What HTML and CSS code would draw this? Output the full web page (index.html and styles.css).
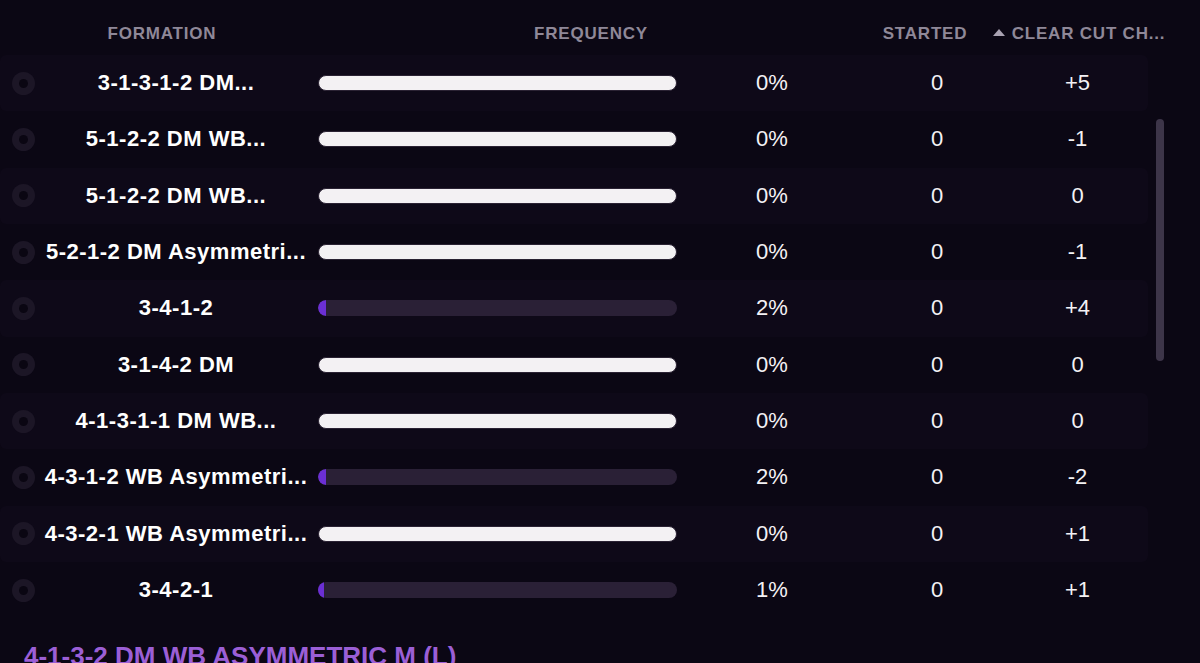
FILE: index.html
```html
<!DOCTYPE html>
<html>
<head>
<meta charset="utf-8">
<link rel="stylesheet" href="styles.css">
</head>
<body>
<div class="panel">
  <div class="head">
    <div>FORMATION</div>
    <div>FREQUENCY</div>
    <div>STARTED</div>
    <div><span class="tri"></span>CLEAR CUT CH...</div>
  </div>
  <div class="body">
    <div class="list">
      <div class="row stripe"><span class="radio"></span><span class="name">3-1-3-1-2 DM...</span><span class="bar full"></span><span class="val pct">0%</span><span class="val">0</span><span class="val">+5</span></div>
      <div class="row"><span class="radio"></span><span class="name">5-1-2-2 DM WB...</span><span class="bar full"></span><span class="val pct">0%</span><span class="val">0</span><span class="val">-1</span></div>
      <div class="row stripe"><span class="radio"></span><span class="name">5-1-2-2 DM WB...</span><span class="bar full"></span><span class="val pct">0%</span><span class="val">0</span><span class="val">0</span></div>
      <div class="row"><span class="radio"></span><span class="name">5-2-1-2 DM Asymmetri...</span><span class="bar full"></span><span class="val pct">0%</span><span class="val">0</span><span class="val">-1</span></div>
      <div class="row stripe"><span class="radio"></span><span class="name">3-4-1-2</span><span class="bar track"><span class="fill" style="width:8px"></span></span><span class="val pct">2%</span><span class="val">0</span><span class="val">+4</span></div>
      <div class="row"><span class="radio"></span><span class="name">3-1-4-2 DM</span><span class="bar full"></span><span class="val pct">0%</span><span class="val">0</span><span class="val">0</span></div>
      <div class="row stripe"><span class="radio"></span><span class="name">4-1-3-1-1 DM WB...</span><span class="bar full"></span><span class="val pct">0%</span><span class="val">0</span><span class="val">0</span></div>
      <div class="row"><span class="radio"></span><span class="name">4-3-1-2 WB Asymmetri...</span><span class="bar track"><span class="fill" style="width:8px"></span></span><span class="val pct">2%</span><span class="val">0</span><span class="val">-2</span></div>
      <div class="row stripe"><span class="radio"></span><span class="name">4-3-2-1 WB Asymmetri...</span><span class="bar full"></span><span class="val pct">0%</span><span class="val">0</span><span class="val">+1</span></div>
      <div class="row"><span class="radio"></span><span class="name">3-4-2-1</span><span class="bar track"><span class="fill" style="width:6px"></span></span><span class="val pct">1%</span><span class="val">0</span><span class="val">+1</span></div>
    </div>
    <div class="scroll"><div class="thumb"></div></div>
  </div>
  <h2 class="title">4-1-3-2 DM WB ASYMMETRIC M (L)</h2>
</div>
</body>
</html>
```

FILE: styles.css
```css
html, body {
  margin: 0;
  padding: 0;
  background: #0b0714;
  height: 100%;
  overflow: hidden;
}
body {
  font-family: "Liberation Sans", Arial, sans-serif;
  color: #f4f2f5;
}
.panel {
  width: 1200px;
  height: 663px;
  overflow: hidden;
}
.head {
  height: 42px;
  padding-top: 13px;
  display: grid;
  grid-template-columns: 324px 534px 134px 174px;
  align-items: center;
  font-weight: 700;
  font-size: 17px;
  letter-spacing: 0.8px;
  color: #8f8898;
}
.head > div {
  text-align: center;
  white-space: nowrap;
}
.tri {
  display: inline-block;
  width: 0;
  height: 0;
  border-left: 6px solid transparent;
  border-right: 6px solid transparent;
  border-bottom: 7px solid #a9a2b2;
  margin-right: 7px;
  vertical-align: 3px;
}
.body {
  display: flex;
  align-items: flex-start;
}
.list {
  width: 1148px;
}
.row {
  height: 56.33px;
  display: grid;
  grid-template-columns: 40px 272px 6px 359px 190px 140px 141px;
  align-items: center;
  border-radius: 6px;
}
.row .radio { grid-column: 1; }
.row .name { grid-column: 2; }
.row .bar { grid-column: 4; }
.stripe {
  background: #0e0918;
}
.radio {
  width: 23px;
  height: 23px;
  margin-left: 12px;
  border-radius: 50%;
  background: #1c1626;
  display: flex;
  align-items: center;
  justify-content: center;
}
.radio::after {
  content: "";
  width: 9px;
  height: 9px;
  border-radius: 50%;
  background: #0a0612;
}
.name {
  font-weight: 700;
  font-size: 22px;
  letter-spacing: 0.5px;
  text-align: center;
  white-space: nowrap;
  color: #ffffff;
}
.bar {
  height: 16px;
  border-radius: 8px;
  box-sizing: border-box;
  display: block;
  overflow: hidden;
}
.bar.full {
  background: #f3f1f3;
  border: 1px solid #2a2233;
}
.bar.track {
  background: #2a2036;
}
.fill {
  display: block;
  height: 100%;
  background: #6b2fd3;
  border-radius: 8px 0 0 8px;
}
.val {
  font-size: 22px;
  text-align: center;
  color: #f4f2f5;
}
.scroll {
  width: 8px;
  margin-left: 8px;
  padding-top: 64px;
}
.thumb {
  width: 8px;
  height: 242px;
  border-radius: 4px;
  background: #3d3549;
}
.title {
  margin: 23px 0 0 24px;
  font-size: 26px;
  line-height: 30px;
  font-weight: 700;
  color: #9b5fd6;
  white-space: nowrap;
}
```
